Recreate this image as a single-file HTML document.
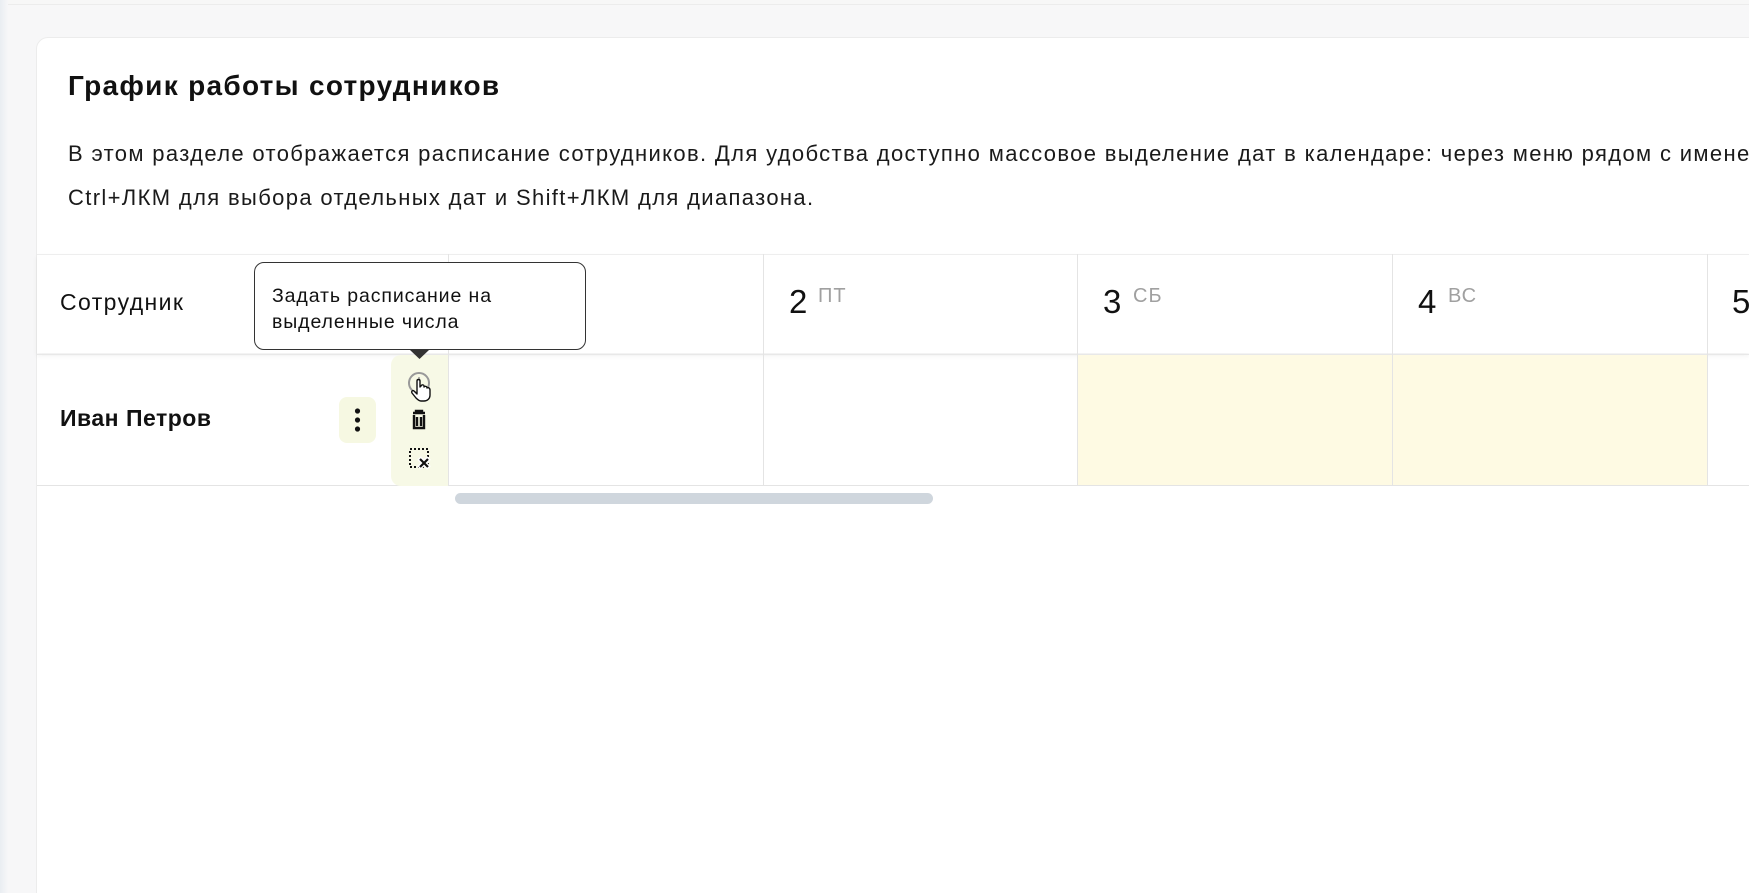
<!DOCTYPE html>
<html><head><meta charset="utf-8"><style>
*{box-sizing:border-box;margin:0;padding:0}
html,body{width:1749px;height:893px;overflow:hidden}
body{background:#f7f7f8;font-family:"Liberation Sans",sans-serif;color:#111;position:relative}
.topline{position:absolute;left:0;top:0;width:1749px;height:5px;border-bottom:1px solid #ececec;background:#f7f7f7}
.lstrip{position:absolute;left:0;top:0;width:8px;height:893px;background:linear-gradient(90deg,#e9edf2,#f7f7f8)}
.card{position:absolute;left:36px;top:37px;width:1760px;height:880px;background:#fff;border:1px solid #ececec;border-radius:12px}
.abs{position:absolute}
h1{position:absolute;left:68px;top:70px;font-size:28px;font-weight:bold;white-space:nowrap;letter-spacing:1.3px}
.p{position:absolute;left:68px;top:132px;font-size:22px;line-height:43.5px;white-space:nowrap;color:#1a1a1a;letter-spacing:1.35px}
.hdr{position:absolute;left:37px;top:254px;width:1712px;height:99px;background:#fff;border-top:1px solid #eee;box-shadow:0 3px 5px rgba(0,0,0,.06)}
.row{position:absolute;left:37px;top:354px;width:1712px;height:132px;border-bottom:1px solid #e4e4e4;border-top:1px solid #e8e8e8}
.vl{position:absolute;width:1px;background:#e4e4e4}
.num{position:absolute;top:283px;font-size:33px;color:#111;font-weight:500}
.dw{position:absolute;top:285px;font-size:20px;color:#a0a0a0;letter-spacing:1px}
</style></head><body>
<div class="topline"></div><div class="lstrip"></div>
<div class="card"></div>
<h1>График работы сотрудников</h1>
<div class="p">В этом разделе отображается расписание сотрудников. Для удобства доступно массовое выделение дат в календаре: через меню рядом с именем<br>Ctrl+ЛКМ для выбора отдельных дат и Shift+ЛКМ для диапазона.</div>
<div class="hdr"></div>
<div class="row"></div>
<div class="abs" style="left:1077px;top:355px;width:630px;height:130px;background:#fefae3"></div>
<div class="vl" style="left:448px;top:254px;height:232px"></div>
<div class="vl" style="left:763px;top:254px;height:232px"></div>
<div class="vl" style="left:1077px;top:254px;height:232px"></div>
<div class="vl" style="left:1392px;top:254px;height:232px"></div>
<div class="vl" style="left:1707px;top:254px;height:232px"></div>
<div class="abs" style="left:60px;top:289px;font-size:23px;letter-spacing:1.4px">Сотрудник</div>
<div class="num" style="left:789px">2</div><div class="dw" style="left:818px">ПТ</div>
<div class="num" style="left:1103px">3</div><div class="dw" style="left:1133px">СБ</div>
<div class="num" style="left:1418px">4</div><div class="dw" style="left:1448px">ВС</div>
<div class="num" style="left:1732px">5</div>
<div class="abs" style="left:60px;top:405px;font-size:23px;font-weight:bold;letter-spacing:0.5px">Иван Петров</div>
<div class="abs" style="left:339px;top:397px;width:37px;height:46px;background:#f6f8e2;border-radius:8px"></div>
<svg class="abs" style="left:339px;top:397px" width="37" height="46"><circle cx="18.5" cy="14" r="2.6" fill="#111"/><circle cx="18.5" cy="23" r="2.6" fill="#111"/><circle cx="18.5" cy="32" r="2.6" fill="#111"/></svg>
<div class="abs" style="left:391px;top:355px;width:57px;height:131px;background:#f7f9e6;border-radius:10px 0 0 10px"></div>
<svg class="abs" style="left:395px;top:365px" width="50" height="115">
<circle cx="24" cy="18" r="10" fill="none" stroke="#999" stroke-width="2"/>
<path d="M24 12v7" stroke="#999" stroke-width="1.5"/>
<path d="M22 16c0-2 3-2 3 0v6l1-1c1-2 3-1 3 0l0 1c1-1 3-1 3 1c1-1 3 0 3 2v5c0 4-3 6-6 6h-3c-2 0-4-2-5-3l-4-5c-1-2 1-3 2-2l3 3z" fill="#fff" stroke="#111" stroke-width="1.4" stroke-linejoin="round"/>
<path d="M18 48h12M21 48v-2h6v2M19 50v13h10V50M22 52v9M26 52v9" fill="none" stroke="#111" stroke-width="2.4"/>
<rect x="15" y="84" width="18" height="18" fill="none" stroke="#111" stroke-width="2" stroke-dasharray="2 2"/>
<path d="M24 93l10 10M34 93l-10 10" stroke="#fff" stroke-width="5"/>
<path d="M25 94l8 8M33 94l-8 8" stroke="#111" stroke-width="2.2"/>
</svg>
<div class="abs" style="left:254px;top:262px;width:332px;height:88px;background:#fff;border:1.5px solid #333;border-radius:10px;padding:20px 0 0 17px;font-size:19.5px;line-height:26px;color:#111;letter-spacing:0.9px;white-space:nowrap">Задать расписание на<br>выделенные числа</div>
<svg class="abs" style="left:410px;top:350px" width="20" height="10"><path d="M0 0h19l-9.5 9z" fill="#333"/></svg>
<div class="abs" style="left:455px;top:493px;width:478px;height:11px;background:#cfd6dd;border-radius:6px"></div>
</body></html>
